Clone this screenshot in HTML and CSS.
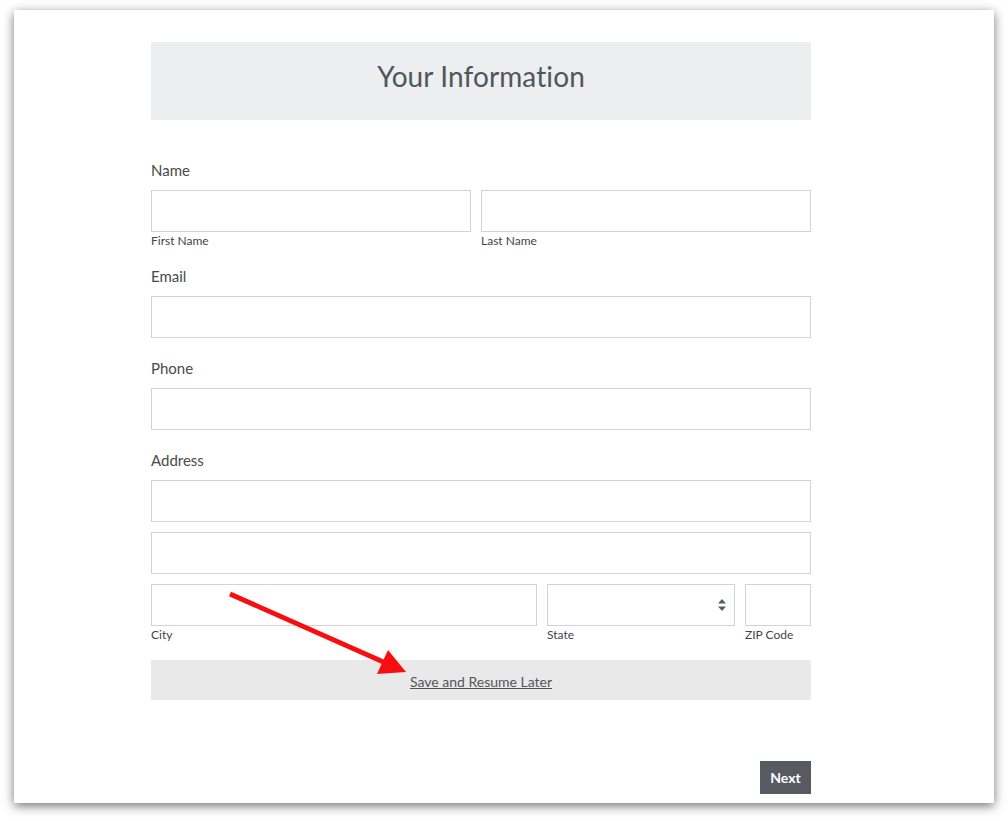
FILE: index.html
```html
<!DOCTYPE html>
<html>
<head>
<meta charset="utf-8">
<title>Your Information</title>
<link rel="stylesheet" href="styles.css">
</head>
<body>
<div class="window">
  <div class="form">
    <div class="header"><h1>Your Information</h1></div>

    <div class="field sub">
      <div class="label">Name</div>
      <div class="row name-row">
        <div class="col"><div class="input"></div><div class="sublabel">First Name</div></div>
        <div class="col"><div class="input"></div><div class="sublabel">Last Name</div></div>
      </div>
    </div>

    <div class="field">
      <div class="label">Email</div>
      <div class="input"></div>
    </div>

    <div class="field">
      <div class="label">Phone</div>
      <div class="input"></div>
    </div>

    <div class="field sub">
      <div class="label">Address</div>
      <div class="input stack"></div>
      <div class="input stack"></div>
      <div class="row addr-row">
        <div class="col"><div class="input"></div><div class="sublabel">City</div></div>
        <div class="col"><div class="input select"><svg class="updown" width="8" height="12" viewBox="0 0 8 12"><path d="M4 0 L8 4.5 H0 Z M4 12 L8 7.5 H0 Z" fill="#5a5f66"/></svg></div><div class="sublabel">State</div></div>
        <div class="col"><div class="input"></div><div class="sublabel">ZIP Code</div></div>
      </div>
    </div>

    <div class="save"><a href="#">Save and Resume Later</a></div>

    <div class="actions"><button class="next">Next</button></div>
  </div>
</div>
<svg class="arrow" width="1008" height="821" viewBox="0 0 1008 821">
  <line x1="230" y1="594" x2="388" y2="664" stroke="#f70f0f" stroke-width="5"/>
  <polygon points="406,672 388,650 377,674" fill="#f70f0f"/>
</svg>
</body>
</html>
```
FILE: styles.css
```css
* { box-sizing: border-box; }
html, body { margin: 0; padding: 0; background: #ffffff; }
body {
  font-family: Lato, "Open Sans", "Liberation Sans", sans-serif;
  color: #444444;
  width: 1008px;
  height: 821px;
  overflow: hidden;
  padding: 10px 14px;
}
.window {
  width: 980px;
  height: 793px;
  background: #ffffff;
  box-shadow: 0 3px 10px rgba(0, 0, 0, 0.55);
  padding-top: 32px;
  padding-left: 137px;
}
.form { width: 660px; }
.header {
  height: 78px;
  background: #eceeef;
  display: flex;
  align-items: center;
  justify-content: center;
  padding-bottom: 10px;
}
.header h1 {
  margin: 0;
  font-weight: 400;
  font-size: 28px;
  color: #50565c;
  letter-spacing: 0.1px;
}
.field { margin-bottom: 20px; }
.field.sub { margin-bottom: 16px; }
.header + .field { margin-top: 40px; }
.label {
  font-size: 15px;
  line-height: 20px;
  height: 20px;
  margin-bottom: 10px;
  color: #4a4a4a;
}
.input {
  height: 42px;
  border: 1px solid #cfd4d4;
  background: #fff;
}
.input.stack { margin-bottom: 10px; }
.row { display: grid; column-gap: 10px; }
.name-row { grid-template-columns: 320px 1fr; }
.addr-row { grid-template-columns: 386px 188px 66px; }
.sublabel {
  font-size: 12px;
  line-height: 18px;
  height: 18px;
  color: #444;
}
.select { position: relative; }
.updown { position: absolute; right: 8px; top: 14px; }
.save {
  height: 40px;
  background: #e9e9e9;
  display: flex;
  align-items: center;
  justify-content: center;
  font-size: 14px;
  padding-top: 2px;
}
.save a { color: #50565c; text-decoration: underline; }
.actions {
  margin-top: 61px;
  display: flex;
  justify-content: flex-end;
}
.next {
  height: 33px;
  width: 51px;
  background: #575b61;
  color: #ffffff;
  border: none;
  font-family: Lato, "Open Sans", "Liberation Sans", sans-serif;
  font-weight: 700;
  font-size: 14px;
  padding: 0;
}
.arrow { position: absolute; left: 0; top: 0; pointer-events: none; }
```
